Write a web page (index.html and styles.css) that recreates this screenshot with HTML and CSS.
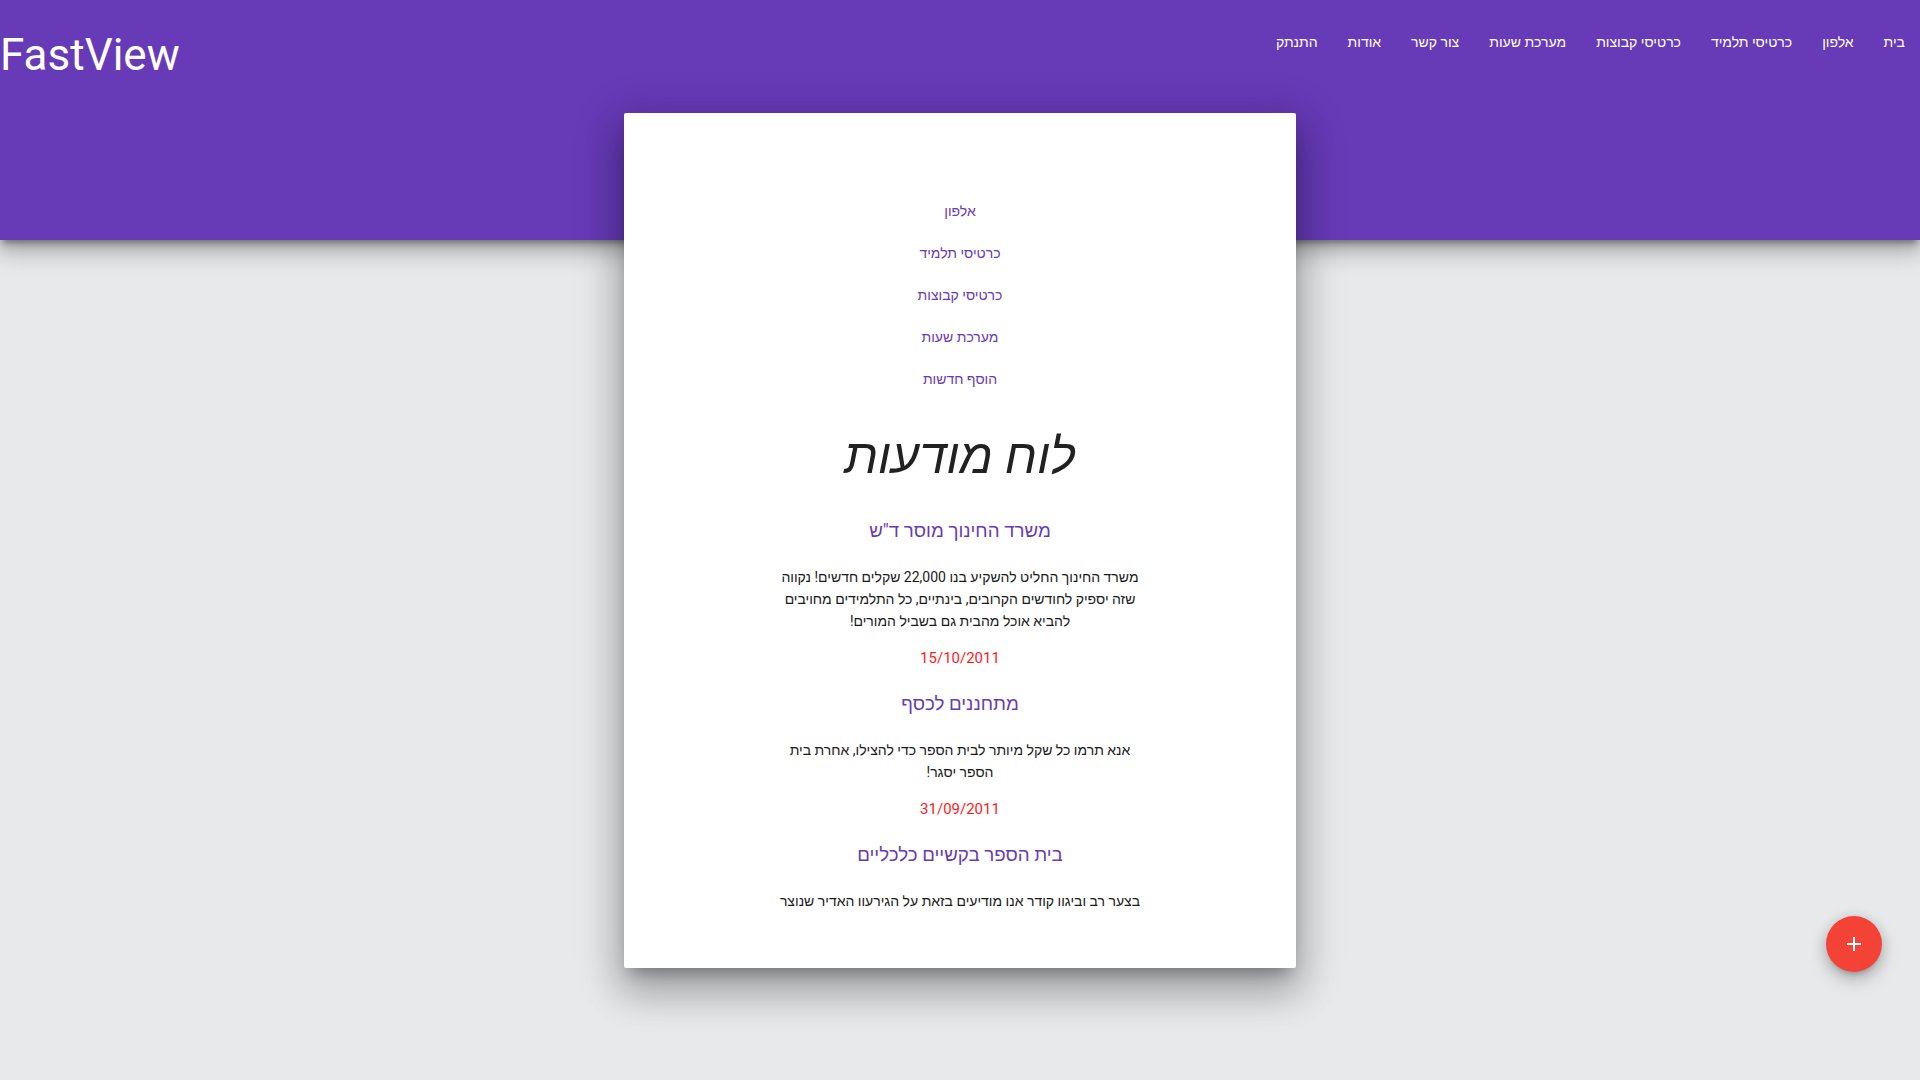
FILE: index.html
```html
<!DOCTYPE html>
<html lang="he" dir="rtl">
<head>
<meta charset="utf-8">
<title>FastView</title>
<link rel="stylesheet" href="styles.css">
</head>
<body>
<header class="topbar">
  <nav class="nav">
    <a href="#">בית</a>
    <a href="#">אלפון</a>
    <a href="#">כרטיסי תלמיד</a>
    <a href="#">כרטיסי קבוצות</a>
    <a href="#">מערכת שעות</a>
    <a href="#">צור קשר</a>
    <a href="#">אודות</a>
    <a href="#">התנתק</a>
  </nav>
  <a class="brand" href="#" dir="ltr">FastView</a>
</header>
<main class="main">
  <section class="card">
    <ul class="links">
      <li><a href="#">אלפון</a></li>
      <li><a href="#">כרטיסי תלמיד</a></li>
      <li><a href="#">כרטיסי קבוצות</a></li>
      <li><a href="#">מערכת שעות</a></li>
      <li><a href="#">הוסף חדשות</a></li>
    </ul>
    <h1 class="title">לוח מודעות</h1>
    <article class="news">
      <h2 class="news-title">משרד החינוך מוסר ד"ש</h2>
      <p class="news-body">משרד החינוך החליט להשקיע בנו 22,000 שקלים חדשים! נקווה שזה יספיק לחודשים הקרובים, בינתיים, כל התלמידים מחויבים להביא אוכל מהבית גם בשביל המורים!</p>
      <p class="news-date">15/10/2011</p>
    </article>
    <article class="news">
      <h2 class="news-title">מתחננים לכסף</h2>
      <p class="news-body">אנא תרמו כל שקל מיותר לבית הספר כדי להצילו, אחרת בית הספר יסגר!</p>
      <p class="news-date">31/09/2011</p>
    </article>
    <article class="news">
      <h2 class="news-title">בית הספר בקשיים כלכליים</h2>
      <p class="news-body">בצער רב וביגוו קודר אנו מודיעים בזאת על הגירעוו האדיר שנוצר</p>
    </article>
  </section>
</main>
<a class="fab" href="#" aria-label="הוסף">
  <svg width="16" height="16" viewBox="0 0 16 16"><path d="M8 1v14M1 8h14" stroke="#fff" stroke-width="2" fill="none"/></svg>
</a>
</body>
</html>
```
FILE: styles.css
```css
html, body {
  margin: 0;
  padding: 0;
}
body {
  background: #e8e9eb;
  font-family: Roboto, "Liberation Sans", "Noto Sans", sans-serif;
  font-size: 14px;
  color: rgba(0, 0, 0, 0.87);
  min-height: 1080px;
  overflow: hidden;
}
a {
  text-decoration: none;
}
.topbar {
  position: relative;
  z-index: 1;
  height: 240px;
  background: #673ab7;
  display: flex;
  justify-content: space-between;
  align-items: flex-start;
  box-shadow: 0 12px 22px 2px rgba(0,0,0,0.2), 0 4px 14px 2px rgba(0,0,0,0.16), 0 6px 6px -3px rgba(0,0,0,0.3);
}
.nav {
  display: flex;
  height: 84px;
  align-items: center;
}
.nav a {
  color: #fff;
  font-size: 14px;
  padding: 0 15px;
  line-height: 84px;
}
.brand {
  color: #fff;
  font-size: 44px;
  line-height: 110px;
  font-family: Roboto, "Liberation Sans", sans-serif;
}
.main {
  position: relative;
  z-index: 2;
  margin-top: -127px;
  display: flex;
  justify-content: center;
}
.card {
  width: 672px;
  height: 855px;
  box-sizing: border-box;
  background: #fff;
  border-radius: 2px;
  padding-top: 77px;
  text-align: center;
  box-shadow: 0 24px 38px 3px rgba(0,0,0,0.2), 0 9px 46px 8px rgba(0,0,0,0.16), 0 11px 15px -7px rgba(0,0,0,0.3);
  display: flex;
  flex-direction: column;
  align-items: center;
}
.links {
  list-style: none;
  margin: 0;
  padding: 0;
}
.links li {
  line-height: 42px;
  height: 42px;
}
.links a {
  color: #673ab7;
  font-size: 14px;
}
.title {
  margin: 25px 0 27px;
  font-size: 49px;
  line-height: 64px;
  font-style: italic;
  font-weight: 400;
  color: #212121;
}
.news {
  width: 370px;
  display: flex;
  flex-direction: column;
  align-items: center;
}
.news-title {
  margin: 0;
  font-size: 18.7px;
  line-height: 30px;
  font-weight: 400;
  color: #673ab7;
}
.news-body {
  margin: 20px 0 0;
  font-size: 14px;
  line-height: 22px;
  color: #1a1a1a;
}
.news-date {
  margin: 15px 0 20px;
  font-size: 15px;
  line-height: 22px;
  color: #ff1a1a;
}
.fab {
  position: fixed;
  right: 38px;
  bottom: 108px;
  z-index: 5;
  width: 56px;
  height: 56px;
  border-radius: 50%;
  background: #f44336;
  display: flex;
  align-items: center;
  justify-content: center;
  box-shadow: 0 8px 17px 2px rgba(0,0,0,0.14), 0 3px 14px 2px rgba(0,0,0,0.12), 0 5px 5px -3px rgba(0,0,0,0.2);
}
```
